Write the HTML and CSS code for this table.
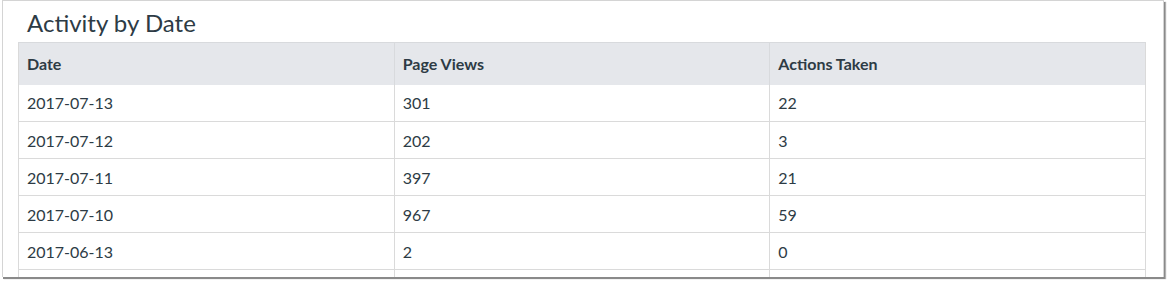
FILE: index.html
```html
<!DOCTYPE html>
<html lang="en">
<head>
<meta charset="utf-8">
<title>Activity by Date</title>
<link rel="stylesheet" href="styles.css">
</head>
<body>
<div class="frame">
  <div class="panel">
    <h2 class="title">Activity by Date</h2>
    <table class="activity">
      <thead>
        <tr><th>Date</th><th>Page Views</th><th>Actions Taken</th></tr>
      </thead>
      <tbody>
        <tr><td>2017-07-13</td><td>301</td><td>22</td></tr>
        <tr><td>2017-07-12</td><td>202</td><td>3</td></tr>
        <tr><td>2017-07-11</td><td>397</td><td>21</td></tr>
        <tr><td>2017-07-10</td><td>967</td><td>59</td></tr>
        <tr><td>2017-06-13</td><td>2</td><td>0</td></tr>
        <tr class="more" aria-hidden="true"><td></td><td></td><td></td></tr>
      </tbody>
    </table>
  </div>
</div>
</body>
</html>
```
FILE: styles.css
```css
html, body {
  margin: 0;
  padding: 0;
  background: #ffffff;
}
body {
  width: 1167px;
  height: 281px;
  overflow: hidden;
  font-family: Lato, "Liberation Sans", sans-serif;
  color: #2d3b45;
}
.frame {
  margin: 0 0 0 2px;
  width: 1162px;
  height: 277px;
  border: 1px solid #d4d4d4;
  border-bottom: none;
  box-sizing: border-box;
  box-shadow: 1px 2px 0 #8a8a8a, 2px 2px 1px #b0b0b0;
  background: #fff;
  overflow: hidden;
}
.panel {
  padding: 0 17px 0 15px;
}
.title {
  margin: 0;
  padding: 7px 0 0 9px;
  height: 41px;
  box-sizing: border-box;
  font-size: 24px;
  font-weight: 400;
  line-height: 30px;
  color: #2d3b45;
}
.activity {
  width: 1128px;
  border-collapse: collapse;
  table-layout: fixed;
  font-size: 16px;
  border-left: 1px solid #dadada;
  border-right: 1px solid #dadada;
}
.activity th {
  background: #e5e7eb;
  height: 42px;
  padding: 0 8px;
  text-align: left;
  font-size: 16px;
  font-weight: 700;
  border-left: 1px solid #d8dadd;
  border-top: 1px solid #d8dadd;
  box-sizing: border-box;
}
.activity td {
  height: 37px;
  padding: 0 8px;
  border-left: 1px solid #dadada;
  border-bottom: 1px solid #dadada;
  box-sizing: border-box;
}
.activity th:first-child, .activity td:first-child {
  border-left: none;
}
```
